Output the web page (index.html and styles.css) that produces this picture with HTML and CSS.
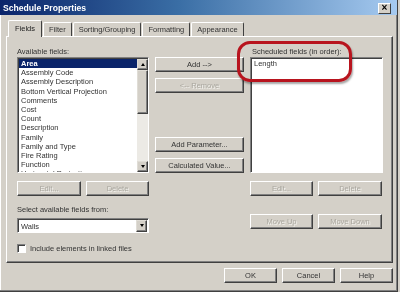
FILE: index.html
```html
<!DOCTYPE html>
<html lang="en">
<head>
    <meta charset="UTF-8">
    <title>Schedule Properties</title>
    <link rel="stylesheet" href="styles.css">
</head>
<body>

    <div class="window">
        <div class="titlebar">
            <span class="title">Schedule Properties</span>
            <span class="close">&#215;</span>
        </div>

        <div class="tabs">
            <div class="tab active">Fields</div>
            <div class="tab">Filter</div>
            <div class="tab">Sorting/Grouping</div>
            <div class="tab">Formatting</div>
            <div class="tab">Appearance</div>
        </div>

        <div class="panel">
            <!-- 左列: 可用字段 -->
            <div class="col">
                <div class="label">Available fields:</div>
                <div class="listbox">
                    <ul class="items">
                        <li class="sel">Area</li>
                        <li>Assembly Code</li>
                        <li>Assembly Description</li>
                        <li>Bottom Vertical Projection</li>
                        <li>Comments</li>
                        <li>Cost</li>
                        <li>Count</li>
                        <li>Description</li>
                        <li>Family</li>
                        <li>Family and Type</li>
                        <li>Fire Rating</li>
                        <li>Function</li>
                        <li>Horizontal Projection</li>
                    </ul>
                    <div class="scrollbar">
                        <div class="sb-btn"><i class="up"></i></div>
                        <div class="thumb"></div>
                        <div class="track"></div>
                        <div class="sb-btn"><i class="down"></i></div>
                    </div>
                </div>
                <div class="btn-row">
                    <button class="btn w64" disabled>Edit...</button>
                    <button class="btn w63" disabled>Delete</button>
                </div>
                <div class="label label-sel">Select available fields from:</div>
                <div class="combo">
                    <span class="combo-text">Walls</span>
                    <div class="sb-btn combo-btn"><i class="down"></i></div>
                </div>
                <div class="check">
                    <span class="box"></span>
                    <span>Include elements in linked files</span>
                </div>
            </div>

            <!-- 中列: 操作按钮 -->
            <div class="col mid">
                <button class="btn add">Add --&gt;</button>
                <button class="btn remove" disabled>&lt;-- Remove</button>
                <button class="btn param">Add Parameter...</button>
                <button class="btn calc">Calculated Value...</button>
            </div>

            <!-- 右列: 已选字段 -->
            <div class="col">
                <div class="label label-right">Scheduled fields (in order):</div>
                <div class="listbox">
                    <ul class="items">
                        <li>Length</li>
                    </ul>
                </div>
                <div class="btn-row">
                    <button class="btn w63" disabled>Edit...</button>
                    <button class="btn w64" disabled>Delete</button>
                </div>
                <div class="btn-row move-row">
                    <button class="btn w63" disabled>Move Up</button>
                    <button class="btn w64" disabled>Move Down</button>
                </div>
            </div>
        </div>

        <div class="footer">
            <button class="btn foot">OK</button>
            <button class="btn foot">Cancel</button>
            <button class="btn foot">Help</button>
        </div>

        <div class="ring"></div>
    </div>

</body>
</html>
```

FILE: styles.css
```css
body,ul,li{ margin: 0; padding: 0; }
li{list-style: none;}

body{
    background: #d4d0c8;
    font-family: "Liberation Sans", Arial, sans-serif;
    font-size: 7.5px;
    color: #111;
    overflow: hidden;
}

.window{
    width: 397px;
    height: 291px;
    background: #d4d0c8;
    border-right: 1px solid #404040;
    border-bottom: 1px solid #404040;
    box-shadow: inset -1px -1px #808080, inset 1px 0 #fff;
    position: relative;
    will-change: transform;
}

.titlebar{
    height: 15px;
    background: linear-gradient(to right, #0a246a, #3a6ea5 45%, #a6caf0);
    display: flex;
    align-items: center;
    justify-content: space-between;
    padding: 0 6px 0 3px;
}

.titlebar .title{
    color: #fff;
    font-weight: bold;
    font-size: 8.6px;
}

.titlebar .close{
    width: 13px;
    height: 11px;
    margin-top: 2px;
    background: #d4d0c8;
    border: 1px solid;
    border-color: #fff #404040 #404040 #fff;
    box-sizing: border-box;
    font-size: 10px;
    line-height: 8px;
    text-align: center;
    font-weight: bold;
    color: #000;
}

/* 标签页 */
.tabs{
    display: flex;
    align-items: flex-end;
    height: 16px;
    margin-top: 5px;
    padding-left: 8px;
    gap: 1px;
    position: relative;
    z-index: 1;
}

.tab{
    height: 14px;
    line-height: 13px;
    padding: 0 5px;
    border: 1px solid;
    border-color: #fff #404040 transparent #fff;
    border-bottom: none;
    border-radius: 2px 2px 0 0;
    box-sizing: border-box;
    color: #333;
}

.tab.active{
    height: 17px;
    margin-bottom: -1px;
    padding: 0 6px;
    background: #d4d0c8;
    line-height: 15px;
    color: #222;
}

.panel{
    margin: 0 4px 0 6px;
    height: 227px;
    box-sizing: border-box;
    border: 1px solid;
    border-color: #fff #404040 #404040 #fff;
    box-shadow: inset -1px -1px #808080;
    padding: 10px 0 0 10px;
    display: grid;
    grid-template-columns: 132px 89px 133px;
    column-gap: 6px;
    align-items: start;
}

.col{
    display: flex;
    flex-direction: column;
}

.label{
    height: 10px;
    line-height: 9px;
    color: #333;
}

.label-right{
    padding-left: 2px;
}

.listbox{
    height: 116px;
    background: #fff;
    border: 1px solid;
    border-color: #808080 #fff #fff #808080;
    box-shadow: inset 1px 1px #404040;
    box-sizing: border-box;
    display: flex;
    overflow: hidden;
}

.items{
    flex: 1;
    padding: 1px 0 0 1px;
    overflow: hidden;
}

.items li{
    height: 9.2px;
    line-height: 9.2px;
    padding-left: 2px;
    white-space: nowrap;
    color: #333;
}

.items li.sel{
    background: #0a246a;
    color: #fff;
    font-weight: bold;
}

.scrollbar{
    width: 11px;
    display: flex;
    flex-direction: column;
    margin: 1px 0 0 0;
}

.sb-btn{
    width: 11px;
    height: 11px;
    background: #d4d0c8;
    border: 1px solid;
    border-color: #e0ddd6 #404040 #404040 #e0ddd6;
    box-shadow: inset -1px -1px #808080;
    box-sizing: border-box;
    display: flex;
    align-items: center;
    justify-content: center;
}

.thumb{
    height: 44px;
    background: #d4d0c8;
    border: 1px solid;
    border-color: #e0ddd6 #404040 #404040 #e0ddd6;
    box-shadow: inset -1px -1px #808080;
    box-sizing: border-box;
}

.track{
    flex: 1;
    background: #eceae5;
}

.up{
    width: 0;
    height: 0;
    border-left: 2.5px solid transparent;
    border-right: 2.5px solid transparent;
    border-bottom: 3px solid #000;
}

.down{
    width: 0;
    height: 0;
    border-left: 2.5px solid transparent;
    border-right: 2.5px solid transparent;
    border-top: 3px solid #000;
}

/* 按钮 */
.btn{
    height: 15px;
    padding: 0;
    font-family: inherit;
    font-size: 7.5px;
    color: #333;
    background: #d4d0c8;
    border: 1px solid;
    border-color: #fff #404040 #404040 #fff;
    box-shadow: inset -1px -1px #808080;
    box-sizing: border-box;
}

.btn:disabled{
    color: #aaa79f;
    text-shadow: 1px 1px #f4f3ef;
}

.btn-row{
    display: flex;
    gap: 5px;
    margin-top: 8px;
}

.move-row{
    margin-top: 18px;
}

.w63{ width: 63px; }
.w64{ width: 64px; }

.mid{
    padding-top: 10px;
}

.mid .btn{
    width: 89px;
}

.mid .remove{
    margin-top: 6px;
}

.mid .param{
    margin-top: 44px;
}

.mid .calc{
    margin-top: 6px;
}

.label-sel{
    margin-top: 9px;
}

.combo{
    margin-top: 3px;
    width: 132px;
    height: 15px;
    background: #fff;
    border: 1px solid;
    border-color: #808080 #fff #fff #808080;
    box-shadow: inset 1px 1px #404040;
    box-sizing: border-box;
    display: flex;
    align-items: center;
    padding: 1px 1px 0 3px;
}

.combo-text{
    flex: 1;
    color: #333;
}

.combo-btn{
    height: 12px;
    margin-top: -1px;
}

.check{
    margin-top: 10px;
    display: flex;
    align-items: center;
    gap: 4px;
    height: 10px;
    color: #333;
}

.check .box{
    width: 9px;
    height: 9px;
    background: #fff;
    border: 1px solid;
    border-color: #808080 #fff #fff #808080;
    box-shadow: inset 1px 1px #404040;
    box-sizing: border-box;
}

.footer{
    display: flex;
    justify-content: flex-end;
    gap: 5px;
    margin-top: 5px;
    padding-right: 4px;
}

.footer .foot{
    width: 53px;
}

/* 红色标注圈 */
.ring{
    position: absolute;
    left: 237px;
    top: 41px;
    width: 115px;
    height: 41px;
    border: 3px solid #b8141e;
    border-radius: 13px;
    box-sizing: border-box;
    box-shadow: 1px 2px 2px rgba(0,0,0,.35);
}
```
